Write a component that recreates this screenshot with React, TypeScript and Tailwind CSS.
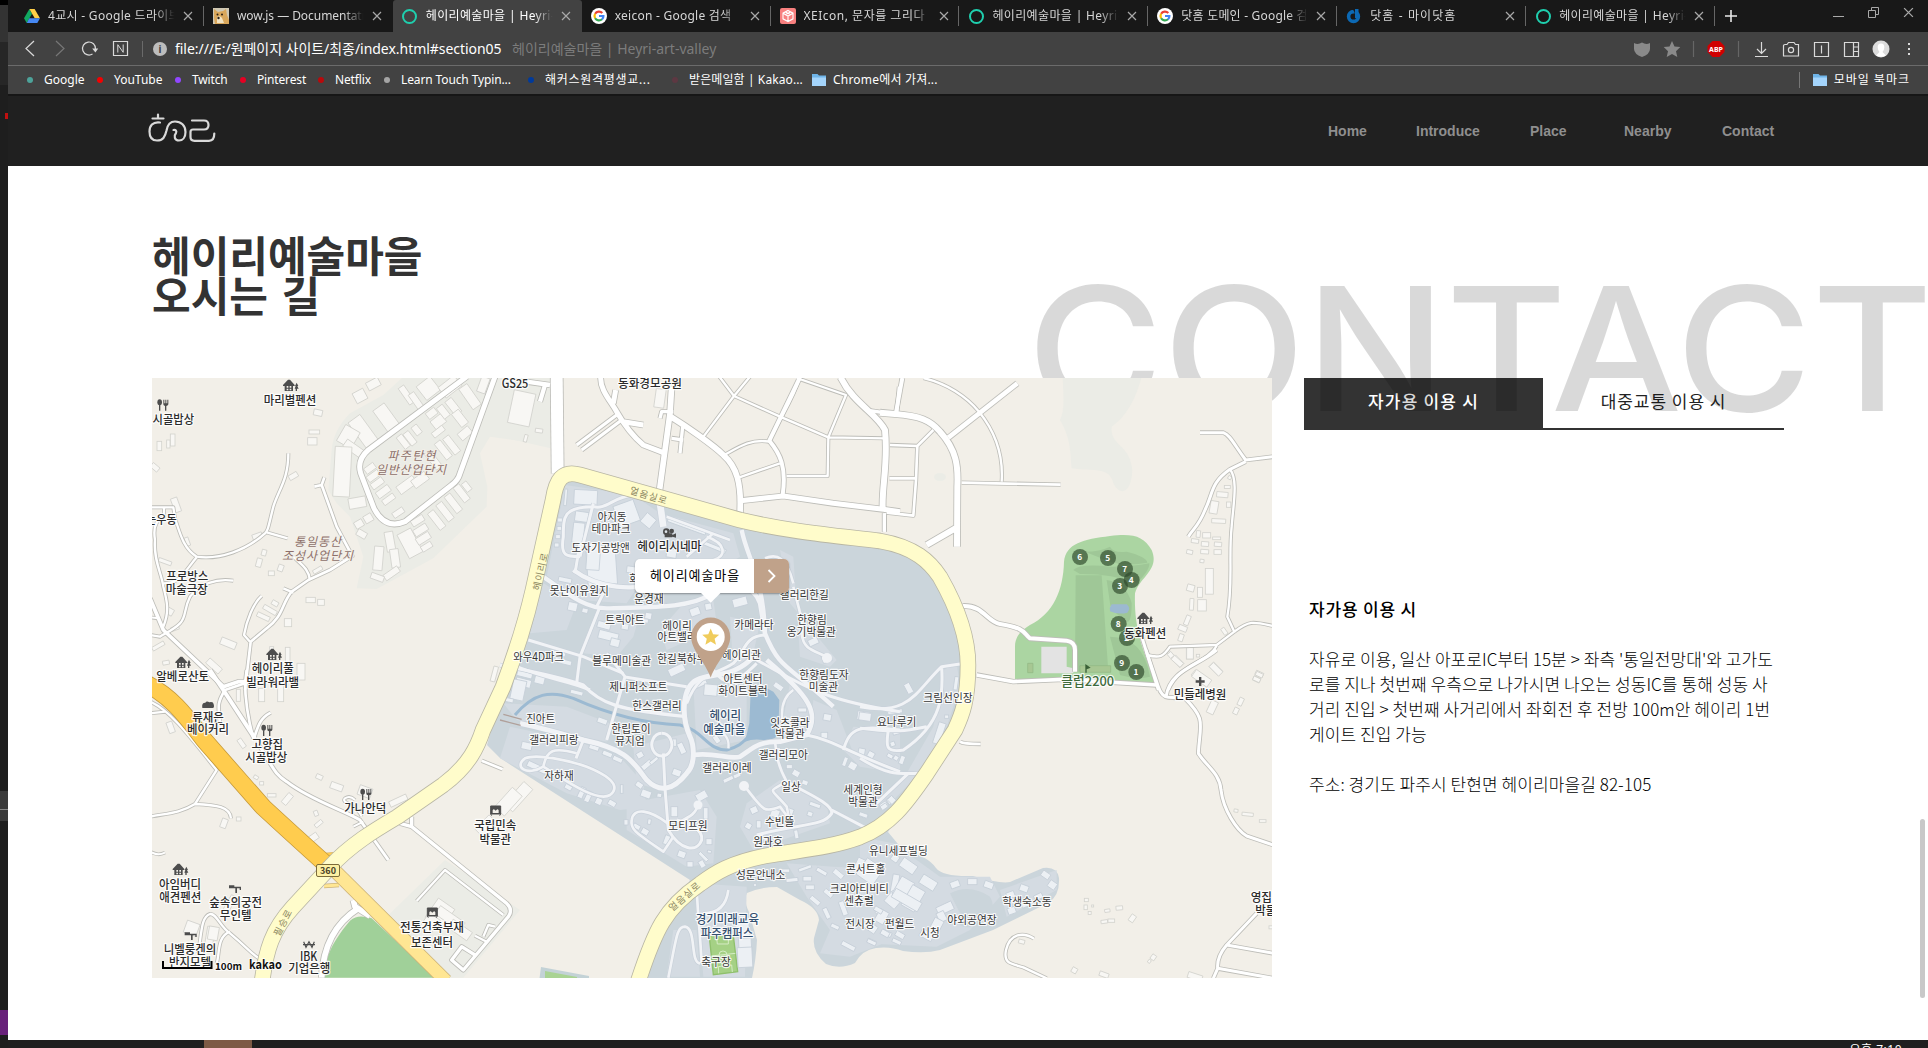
import React from "react";

/* ------------------------------------------------------------------ */
/* Map data. Every entry names the tile it belongs to; tile units are   */
/* a third of a screen pixel.                                          */
/* ------------------------------------------------------------------ */
const TILE: Record<string, [number, number]> = {
  A: [150, 370],
  B: [500, 370],
  C: [880, 370],
  D: [150, 670],
  E: [500, 670],
  F: [860, 650],
};
const tf = (t: string) => `translate(${TILE[t][0]} ${TILE[t][1]}) scale(0.33333)`;

type Road = [string, string, number];

const whiteRoads: Road[] = [
  // north-west
  ["A", "M950 20 L655 240 Q620 270 632 310 L672 415 Q705 480 765 455 L905 345 Q925 330 930 310 L1035 20", 15],
  ["A", "M415 250 C415 330 385 360 370 410 C355 470 355 480 345 490 C290 540 210 570 140 560 C100 535 90 490 75 445 L70 412 L0 412", 7],
  ["A", "M350 487 L413 505", 7],
  ["A", "M42 412 L42 440 C15 450 10 480 15 510 C10 570 35 610 40 650 C50 690 60 720 40 770", 7],
  ["A", "M140 562 C100 610 90 640 40 640", 7],
  ["A", "M250 632 C200 625 150 640 120 680 C100 720 110 740 90 760 C70 780 45 790 30 800 L0 795", 7],
  ["A", "M493 350 L515 345 L523 322 M515 345 L560 470 L607 558 L540 600 L475 630 L425 665 C395 700 400 740 350 775 L302 815 L285 960", 8],
  ["A", "M480 630 C475 595 455 585 430 560 M400 655 L430 668 M335 678 C310 700 290 750 282 795 L300 815", 7],
  ["A", "M0 742 L25 745", 6],
  ["A", "M0 685 L40 780 L220 950 L265 935 L340 935", 11],
  // north
  ["B", "M170 20 L173 310", 36],
  ["B", "M302 20 C300 60 330 90 350 125 C370 160 400 200 430 225 L490 248 M347 60 L340 100 M370 155 L430 165", 15],
  ["B", "M350 135 L230 225 M365 150 L245 240", 10],
  ["B", "M80 35 L150 45 M135 45 L120 95", 13],
  ["B", "M515 50 L510 130 L478 365 M512 140 C560 170 640 225 670 255 C710 290 725 340 720 430", 17],
  ["B", "M520 125 L485 125 L480 145 M515 205 L550 210 M548 170 L540 250", 10],
  ["B", "M658 20 L702 78 L840 140 L985 202 L1155 205 M750 20 L702 78 L608 203 M900 20 C880 90 840 140 808 215 C750 205 710 235 670 257 M890 24 L1038 75 L985 202 L983 318 L860 318 M718 322 L840 280", 7],
  ["B", "M900 22 L808 212 C840 250 860 290 848 375", 12],
  ["B", "M722 392 L850 378 L1000 400 L1150 418 L1200 425", 15],
  ["B", "M1022 22 C1060 100 1130 130 1155 180 C1165 280 1145 350 1148 415", 18],
  ["B", "M1110 122 L1200 135 M1190 130 L1198 50 M1153 430 L1153 485", 10],
  ["C", "M0 128 L45 132 C120 138 150 150 180 185 C230 240 235 290 232 350 L231 530 M235 470 L140 525", 18],
  ["C", "M67 24 L48 128", 12],
  ["C", "M30 225 L112 228 L160 180 M112 228 L108 330 L100 437 L20 428 M108 325 L28 325 M14 430 L14 485", 8],
  ["C", "M130 24 C200 40 260 80 297 125 C350 190 370 260 365 335", 7],
  ["C", "M412 40 L205 203", 14],
  ["C", "M245 338 L542 344", 8],
  ["C", "M960 188 L1030 188 C1050 195 1060 220 1097 270 L1180 260 M1097 275 L1050 298 C990 340 1000 370 975 420 C955 470 940 475 925 500", 9],
  ["C", "M1050 298 C1075 330 1060 400 1055 470 C1045 560 1060 640 1042 740 L1063 785 L1010 825 L870 830 C850 860 840 865 800 855", 7],
  ["C", "M1063 785 C1110 750 1120 755 1180 768 M1010 828 C980 880 900 880 865 960", 7],
  ["C", "M248 708 C310 705 320 755 360 762 C440 775 430 790 450 805 L560 812 Q585 815 585 840 L585 905", 12],
  ["C", "M290 915 L400 935 L550 928 L830 945", 11],
  ["C", "M782 790 L835 960", 9],
  // west
  ["D", "M180 0 L220 60 L315 205", 12],
  ["D", "M290 0 L285 40 L225 60 M225 60 C200 100 205 110 210 160 M285 30 C285 100 295 150 310 205 M362 128 C330 145 325 165 312 205", 8],
  ["D", "M320 215 C370 290 370 310 410 335 C480 390 580 420 630 450 L715 570", 9],
  ["D", "M0 95 C60 120 120 200 200 300 L135 402 C90 430 50 430 0 440 M135 402 C200 405 240 410 243 445 M0 130 L45 125", 7],
  ["D", "M635 440 C620 400 570 400 585 385 C600 375 610 385 615 390 M610 470 L640 455", 6],
  ["D", "M0 545 C20 555 30 555 45 548", 6],
  ["D", "M785 440 L785 470 L1070 700 Q1090 720 1075 740 L940 900 L905 870 L935 830 L975 855 M750 460 L785 470", 10],
  ["D", "M800 693 L885 600 L1060 735 M1035 770 L1015 765 L1000 800 M975 797 L1010 815", 7],
  ["D", "M995 272 L1058 298", 8],
  ["D", "M145 850 C155 780 155 740 180 732 C200 730 210 770 240 790 C300 840 300 850 335 870 M240 785 C200 800 210 850 200 880", 7],
  ["D", "M610 690 L615 710 L660 738 M625 715 C570 750 520 810 515 923", 17],
  // south-east
  ["F", "M300 275 Q310 282 362 282", 8],
  ["F", "M858 0 L895 110 Q905 140 925 142 L975 145 C1040 210 1020 220 1015 310 C1040 350 1080 370 1083 420 C1090 480 1130 540 1160 558 L1240 585", 9],
  ["F", "M918 140 C930 60 1010 50 1070 0", 9],
  ["F", "M1190 790 L1100 885 Q1070 920 1073 955 L1060 985 M1100 885 L1240 910 M1073 955 L1240 985", 9],
  ["F", "M522 866 C490 845 450 850 438 900 C430 940 450 940 490 952 L560 985", 7],
];

const villageRoads: Road[] = [
  ["E", "M60 160 C130 175 200 195 250 210 C390 240 400 280 440 330 C480 370 520 360 560 310 C590 280 580 220 570 200 C540 130 550 50 590 30 C640 5 700 30 770 -50", 15],
  ["E", "M580 255 C640 245 690 270 720 260 C760 235 770 215 840 215 L920 195 C960 130 930 80 800 -30", 14],
  ["E", "M0 -15 C100 5 180 20 250 45 C300 100 350 120 560 140", 10],
  ["E", "M770 -30 C900 40 960 90 1200 125 M920 195 C1000 210 1050 250 1200 305 M1030 240 C1050 170 1080 165 1200 180", 9],
  ["E", "M250 210 L228 265 M320 210 L375 20 L320 -50 M370 20 L560 50", 9],
  ["E", "M130 290 C80 320 40 290 75 265 C110 250 200 270 260 290 C360 330 350 360 330 375 C290 400 180 320 130 290 C140 240 160 230 230 250", 8],
  ["E", "M495 355 L505 480 C540 540 590 550 605 510 C610 480 570 460 530 450", 9],
  ["E", "M503 460 C450 420 400 410 395 450 C390 480 410 490 490 545 L520 500 M540 455 C570 440 590 430 595 400", 8],
  ["E", "M485 190 A30 34 0 1 0 486 190 M490 250 L495 355", 9],
  ["E", "M735 350 C790 420 790 430 840 410 C870 450 870 455 860 410 C810 350 800 370 860 335 C830 280 830 250 825 215", 8],
  ["E", "M870 340 C900 360 1000 400 995 430 C970 470 900 460 770 495 M995 420 L1100 475", 9],
  ["E", "M685 235 C690 190 660 200 665 160 M850 170 C840 120 850 80 880 60", 7],
  ["E", "M505 923 C530 800 530 770 555 770 C590 775 570 880 600 880 M605 880 C600 780 590 700 590 640 M610 730 C660 730 680 700 685 660", 8],
  ["B", "M220 600 C300 660 400 660 480 640 M130 620 C200 670 260 720 330 715 C420 710 560 720 640 670 C700 640 760 640 780 700 L795 790", 13],
  ["B", "M725 480 C740 560 790 620 795 790 C840 900 860 880 1000 1010", 13],
  ["B", "M795 795 C730 800 740 840 700 880 C640 920 600 900 560 1000 M770 880 C700 950 680 950 640 900", 9],
  ["B", "M85 810 L250 860 L370 910 M300 710 L240 860 L230 940 M310 670 L290 710", 9],
  ["B", "M400 375 C340 380 320 420 280 410 C190 410 190 440 190 500 C180 560 200 560 240 560 M240 520 L225 610 M280 400 L240 560", 9],
  ["B", "M500 440 L690 510 M620 500 C680 520 680 560 640 570 M640 490 L560 560", 8],
  ["B", "M880 650 C890 700 910 740 905 790 C910 840 940 840 980 860 M795 565 C830 550 860 560 880 640", 8],
  ["B", "M480 400 L490 470", 20],
  ["B", "M50 890 C150 930 200 930 270 960", 9],
  ["F", "M0 170 C150 200 170 120 245 50 L300 42 M245 50 C250 130 250 220 130 300 C70 310 80 280 85 240 M0 235 C120 250 150 240 200 230 M0 325 C90 380 120 370 185 370 M145 370 L50 460", 9],
];

/* x, y, width, height, rotation */
type Box = [string, number, number, number, number, number];

const landBoxes: Box[] = [
  ["A", 670, 42, 40, 26, -28], ["A", 630, 78, 36, 34, -28], ["A", 770, 75, 20, 60, -35], ["A", 800, 95, 20, 60, -35],
  ["A", 835, 55, 52, 52, -38], ["A", 900, 50, 60, 40, -38], ["A", 960, 80, 30, 75, -35], ["A", 1000, 45, 26, 48, 20],
  ["A", 710, 145, 42, 84, -36], ["A", 640, 185, 44, 96, -36], ["A", 595, 200, 50, 56, 30], ["A", 610, 235, 60, 26, 35],
  ["A", 577, 305, 50, 150, 3], ["A", 622, 398, 52, 32, -10], ["A", 655, 445, 26, 24, -30], ["A", 627, 462, 26, 22, -30],
  ["A", 635, 492, 30, 20, 30], ["A", 685, 565, 28, 72, 5], ["A", 720, 515, 26, 60, -10], ["A", 735, 565, 26, 56, -8],
  ["A", 725, 610, 50, 20, -35], ["A", 682, 622, 40, 18, 20], ["A", 780, 520, 46, 80, -28], ["A", 812, 480, 44, 22, -32],
  ["A", 820, 505, 44, 22, -32], ["A", 830, 530, 34, 18, -32], ["A", 803, 452, 40, 20, -32], ["A", 745, 428, 36, 18, -34],
  ["A", 860, 450, 22, 62, -38], ["A", 885, 425, 22, 62, -38], ["A", 910, 400, 22, 62, -38], ["A", 935, 370, 22, 56, -38],
  ["A", 950, 350, 18, 30, -38], ["A", 845, 130, 32, 22, -38], ["A", 865, 155, 40, 30, -38], ["A", 880, 125, 22, 40, -38],
  ["A", 910, 110, 24, 52, -38], ["A", 930, 145, 26, 50, -38], ["A", 945, 190, 26, 40, 50], ["A", 865, 185, 40, 18, -38],
  ["A", 760, 215, 20, 44, -38], ["A", 780, 205, 20, 44, -38], ["A", 800, 180, 20, 30, -38], ["A", 880, 240, 22, 60, -38],
  ["A", 905, 225, 22, 60, -38], ["A", 850, 270, 22, 60, -38], ["A", 770, 345, 60, 28, -36], ["A", 810, 330, 50, 28, -36],
  ["A", 660, 295, 34, 20, -36], ["A", 670, 318, 40, 20, -36], ["A", 682, 340, 40, 20, -36], ["A", 700, 365, 44, 22, -36], ["A", 716, 388, 40, 18, -36],
  ["A", 504, 128, 26, 18, 12], ["A", 493, 186, 32, 12, 0], ["A", 487, 214, 28, 22, 0], ["A", 430, 318, 28, 16, -30],
  ["A", 28, 228, 14, 28, 0], ["A", 68, 210, 14, 36, 0], ["A", 55, 222, 10, 24, 0], ["A", 15, 292, 26, 16, 40], ["A", 78, 405, 20, 44, -20],
  ["A", 327, 578, 16, 26, 15], ["A", 342, 548, 14, 18, 15], ["A", 364, 610, 18, 14, 0], ["A", 392, 594, 16, 20, 20], ["A", 503, 600, 30, 12, -30],
  ["A", 482, 690, 28, 16, 0], ["A", 513, 697, 20, 18, 0], ["A", 414, 758, 22, 24, 0], ["A", 340, 740, 40, 14, 25], ["A", 360, 720, 44, 14, 30], ["A", 375, 700, 20, 14, 30],
  ["A", 235, 820, 48, 22, 22], ["A", 192, 888, 50, 20, 42], ["A", 413, 855, 14, 46, 0], ["A", 365, 850, 12, 40, 0], ["A", 453, 905, 24, 50, 0],
  ["A", 60, 725, 20, 20, 30], ["A", 75, 775, 24, 12, -20], ["A", 25, 828, 40, 12, -30], ["A", 48, 878, 20, 12, -10], ["A", 45, 575, 40, 12, 20], ["A", 1033, 912, 14, 46, 15],
  ["A", 322, 498, 30, 16, -20], ["A", 112, 515, 12, 26, -20],
  ["B", 65, 115, 66, 100, 12], ["B", 117, 182, 22, 12, 8], ["B", 77, 205, 10, 22, 15], ["B", 480, 85, 30, 56, 8],
  ["C", 1049, 323, 10, 10, 30], ["C", 1042, 351, 18, 9, 0], ["C", 1027, 374, 34, 16, 5], ["C", 1002, 412, 24, 38, 10], ["C", 1046, 404, 13, 16, 0],
  ["C", 1016, 453, 42, 13, 3], ["C", 955, 492, 12, 20, 5], ["C", 980, 496, 24, 16, 0], ["C", 1010, 505, 24, 8, 0], ["C", 945, 513, 22, 12, 8],
  ["C", 975, 522, 22, 14, 4], ["C", 1014, 523, 22, 13, 4], ["C", 974, 545, 24, 13, 4], ["C", 1013, 546, 22, 14, 0], ["C", 929, 546, 18, 12, 12],
  ["C", 966, 573, 12, 10, 8], ["C", 988, 634, 24, 77, 0], ["C", 932, 654, 22, 20, 15], ["C", 960, 667, 15, 30, 0], ["C", 935, 703, 12, 35, 3],
  ["C", 966, 706, 26, 34, 0], ["C", 922, 751, 14, 30, 22], ["C", 908, 775, 26, 16, 22], ["C", 903, 803, 14, 22, 18], ["C", 1033, 784, 12, 22, -35],
  ["C", 929, 850, 20, 34, 0], ["C", 872, 853, 10, 20, -45], ["C", 893, 874, 18, 36, -45], ["C", 954, 857, 10, 8, 0], ["C", 1008, 897, 20, 40, -45],
  ["C", 955, 920, 40, 20, 40], ["C", 1138, 912, 24, 14, 25], ["C", 1130, 928, 22, 14, 25],
  ["D", 62, 172, 18, 34, -20], ["D", 265, 76, 12, 36, 0], ["D", 335, 75, 18, 40, 0], ["D", 392, 70, 18, 50, 0], ["D", 275, 220, 14, 30, -35],
  ["D", 318, 322, 14, 10, 30], ["D", 335, 340, 12, 10, 0], ["D", 508, 321, 20, 14, 25], ["D", 560, 350, 38, 20, 20], ["D", 412, 387, 18, 36, 40],
  ["D", 365, 376, 26, 10, 0], ["D", 498, 430, 12, 16, -20], ["D", 506, 461, 26, 12, -40], ["D", 490, 503, 30, 20, -35], ["D", 745, 392, 56, 18, -25],
  ["D", 266, 447, 14, 12, 0], ["D", 222, 460, 18, 28, 20], ["D", 1105, 380, 90, 36, -48], ["D", 1075, 395, 80, 40, -48], ["D", 1010, 470, 60, 40, -45],
  ["D", 870, 730, 60, 70, 35], ["D", 900, 745, 90, 30, 35], ["D", 840, 760, 40, 50, 35], ["D", 930, 780, 70, 30, 35], ["D", 125, 775, 40, 38, 20], ["D", 180, 800, 24, 60, 10],
  ["D", 190, 790, 30, 40, 10], ["D", 240, 700, 18, 50, 30], ["D", 645, 365, 40, 30, 20],
  ["F", 932, 15, 14, 16, -40], ["F", 990, 10, 20, 34, 0], ["F", 952, 34, 16, 36, -48], ["F", 1068, 58, 18, 40, -45], ["F", 1025, 85, 56, 26, 35],
  ["F", 1057, 172, 22, 40, 25], ["F", 1198, 74, 22, 12, 25], ["F", 1190, 88, 22, 12, 25], ["F", 1142, 155, 14, 24, 25], ["F", 1128, 183, 14, 20, 25],
  ["F", 1128, 482, 12, 9, 10], ["F", 1163, 493, 34, 10, 6], ["F", 1208, 513, 20, 8, 0], ["F", 742, 782, 16, 9, -8], ["F", 778, 774, 20, 12, -5],
  ["F", 733, 815, 20, 10, -8], ["F", 754, 812, 20, 10, 0], ["F", 817, 805, 16, 22, 35], ["F", 679, 750, 12, 10, 0], ["F", 677, 772, 10, 14, 0],
  ["F", 689, 789, 9, 9, 0], ["F", 698, 768, 6, 6, 0], ["F", 880, 922, 14, 16, 35], ["F", 868, 934, 8, 10, 35], ["F", 643, 961, 16, 16, 30],
  ["F", 732, 974, 28, 14, 20], ["F", 1005, 980, 44, 18, 18], ["F", 485, 875, 18, 12, 15], ["F", 1235, 832, 16, 9, 0],
];

const villageBoxes: Box[] = [
  ["B", 257, 382, 70, 44, 3], ["B", 197, 382, 8, 50, 5], ["B", 380, 430, 64, 66, -20], ["B", 445, 452, 36, 34, 40], ["B", 235, 488, 34, 60, 6],
  ["B", 245, 440, 40, 30, 8], ["B", 180, 450, 14, 12, 0], ["B", 178, 475, 14, 12, 0], ["B", 174, 500, 14, 12, 0], ["B", 170, 525, 14, 12, 0],
  ["B", 305, 590, 88, 110, -4], ["B", 280, 560, 40, 80, 4], ["B", 195, 630, 40, 14, 12], ["B", 218, 710, 28, 26, 12], ["B", 255, 722, 18, 14, 12],
  ["B", 312, 766, 40, 20, 15], ["B", 325, 798, 60, 26, 14], ["B", 345, 818, 28, 24, 14], ["B", 445, 738, 20, 20, 10], ["B", 375, 770, 22, 18, 10],
  ["B", 430, 752, 30, 12, 6], ["B", 585, 725, 30, 24, -20], ["B", 625, 710, 20, 20, -10], ["B", 720, 696, 44, 26, -15], ["B", 515, 550, 30, 26, 10],
  ["B", 400, 600, 40, 20, 8], ["B", 940, 815, 30, 20, -25], ["B", 980, 865, 28, 24, -20], ["B", 175, 850, 44, 12, 14], ["B", 190, 875, 50, 14, 14],
  ["B", 75, 910, 46, 24, 14], ["B", 70, 938, 46, 24, 14], ["B", 120, 925, 30, 34, 14], ["B", 300, 870, 28, 16, 14], ["B", 600, 940, 40, 20, -25], ["B", 530, 900, 50, 24, -25],
  ["B", 640, 530, 80, 12, 22], ["B", 560, 470, 120, 10, 20],
  ["E", 55, 60, 40, 60, 12], ["E", 25, 90, 30, 12, 12], ["E", 80, 228, 32, 22, 12], ["E", 230, 68, 38, 12, 14], ["E", 307, 153, 30, 16, 20],
  ["E", 282, 233, 30, 14, 18], ["E", 322, 252, 30, 14, 22], ["E", 353, 268, 30, 14, 24], ["E", 420, 255, 20, 18, -30], ["E", 440, 285, 34, 16, -40],
  ["E", 462, 272, 28, 10, -40], ["E", 545, 235, 18, 34, -25], ["E", 522, 218, 14, 22, 0], ["E", 530, 308, 26, 20, 20], ["E", 418, 345, 22, 16, 35],
  ["E", 438, 372, 30, 22, 20], ["E", 478, 376, 14, 12, 10], ["E", 110, 292, 60, 18, 25], ["E", 205, 352, 22, 14, 30], ["E", 245, 368, 16, 34, 25],
  ["E", 265, 380, 16, 34, 25], ["E", 296, 394, 20, 20, 25], ["E", 336, 400, 24, 16, 30], ["E", 365, 357, 8, 26, 0], ["E", 378, 457, 12, 16, 0],
  ["E", 410, 470, 22, 14, 30], ["E", 435, 485, 22, 18, 30], ["E", 448, 455, 10, 16, 10], ["E", 605, 378, 34, 24, -30], ["E", 617, 430, 14, 34, 0],
  ["E", 523, 425, 20, 30, 0], ["E", 500, 510, 16, 28, 20], ["E", 545, 553, 24, 20, 20], ["E", 570, 583, 18, 16, 0], ["E", 606, 582, 16, 22, -30],
  ["E", 627, 515, 18, 18, 0], ["E", 628, 545, 12, 8, 10], ["E", 610, 560, 34, 10, 45], ["E", 632, 60, 40, 34, 5], ["E", 650, 208, 16, 24, -35],
  ["E", 685, 328, 32, 12, -25], ["E", 711, 317, 22, 12, -25], ["E", 762, 420, 22, 20, -25], ["E", 745, 468, 18, 18, 30], ["E", 776, 463, 14, 22, 0],
  ["E", 825, 430, 26, 24, 20], ["E", 869, 425, 22, 20, 20], ["E", 930, 432, 16, 14, 20], ["E", 889, 493, 12, 26, -10], ["E", 868, 290, 18, 12, 0],
  ["E", 888, 310, 22, 18, 30], ["E", 915, 338, 18, 14, 20], ["E", 832, 245, 18, 24, 0], ["E", 862, 252, 22, 14, -30], ["E", 907, 120, 26, 12, 0],
  ["E", 982, 142, 24, 20, 10], ["E", 973, 196, 20, 18, 0], ["E", 1093, 138, 42, 26, 8], ["E", 1058, 288, 24, 22, 30], ["E", 1035, 275, 12, 28, 20],
  ["E", 1090, 437, 28, 12, 20], ["E", 1152, 406, 22, 18, -35], ["E", 1172, 390, 22, 18, -35], ["E", 945, 405, 34, 12, 20], ["E", 835, 50, 30, 16, 35],
  ["E", 852, 602, 34, 10, 0], ["E", 876, 630, 36, 12, -6], ["E", 915, 595, 40, 10, -20], ["E", 922, 626, 26, 14, 0], ["E", 965, 605, 34, 12, 30],
  ["E", 1015, 612, 34, 16, 40], ["E", 930, 652, 26, 14, 0], ["E", 945, 692, 34, 14, 40], ["E", 980, 730, 14, 34, -25], ["E", 1005, 770, 26, 12, 25],
  ["E", 985, 670, 30, 14, 40], ["E", 1030, 715, 16, 44, -20], ["E", 1045, 828, 44, 14, 28], ["E", 1090, 590, 50, 40, 25], ["E", 1110, 605, 60, 60, 35],
  ["E", 1185, 640, 20, 54, 10], ["E", 1180, 690, 40, 40, 40], ["E", 1145, 735, 40, 14, 40], ["E", 1110, 770, 44, 24, 35], ["E", 1160, 790, 30, 14, 25],
  ["E", 735, 820, 38, 30, -3], ["E", 735, 862, 44, 60, -3], ["E", 728, 780, 40, 40, -3], ["E", 1115, 815, 26, 12, 25], ["E", 765, 645, 8, 8, 0],
  ["F", 146, 115, 18, 32, -28], ["F", 288, 100, 12, 40, 8], ["F", 238, 250, 22, 66, 18], ["F", 260, 200, 12, 10, 0], ["F", 15, 200, 36, 24, 8],
  ["F", 98, 282, 14, 14, -20], ["F", 90, 318, 18, 12, 30], ["F", 108, 324, 14, 14, 30], ["F", 126, 330, 14, 26, 20], ["F", 33, 314, 20, 18, 30],
  ["F", 5, 305, 20, 20, 10], ["F", 95, 450, 20, 18, 45], ["F", 72, 470, 20, 14, -35], ["F", 10, 495, 26, 12, 20], ["F", 105, 185, 44, 12, -8], ["F", 110, 245, 24, 16, -15],
  ["F", 105, 625, 22, 20, 35], ["F", 145, 648, 50, 30, 35], ["F", 205, 698, 50, 30, 32], ["F", 285, 703, 28, 20, -20], ["F", 337, 695, 28, 18, 0],
  ["F", 386, 705, 28, 20, 20], ["F", 492, 715, 26, 20, 20], ["F", 557, 675, 26, 18, 35], ["F", 577, 705, 24, 22, 35], ["F", 452, 735, 24, 20, -20],
  ["F", 455, 782, 24, 20, -20], ["F", 535, 740, 26, 16, -25], ["F", 497, 765, 24, 12, -20], ["F", 130, 715, 44, 60, 30], ["F", 160, 745, 44, 70, 30],
  ["F", 140, 750, 90, 30, 30], ["F", 255, 775, 50, 26, -25], ["F", 245, 800, 24, 30, -25], ["F", 225, 835, 30, 60, 28], ["F", 200, 855, 40, 24, 28],
  ["F", 65, 800, 30, 40, 30], ["F", 55, 780, 26, 14, 30], ["F", 75, 850, 26, 16, 30], ["F", 120, 855, 28, 16, 30], ["F", 110, 875, 28, 12, 25], ["F", 35, 877, 28, 12, 25],
];

/* tile, text, centre x, centre y, width */
type Label = [string, string, number, number, number];

const mainLabels: Label[] = [
  ["A", "마리별펜션", 420, 91, 158], ["A", "시골밥상", 70, 148, 125], ["A", "는우동", 34, 449, 92],
  ["A", "프로방스", 112, 619, 126], ["A", "마술극장", 110, 658, 126], ["A", "알베로산토", 98, 921, 158],
  ["A", "헤이리풀", 368, 897, 126], ["A", "빌라워라밸", 368, 937, 158],
  ["B", "GS25", 45, 42, 80], ["B", "동화경모공원", 450, 41, 192], ["B", "헤이리시네마", 508, 530, 192],
  ["C", "동화펜션", 796, 791, 126],
  ["D", "류재은", 174, 142, 95], ["D", "베이커리", 174, 180, 126], ["D", "고향집", 352, 223, 95], ["D", "시골밥상", 349, 262, 126],
  ["D", "가나안덕", 646, 415, 126], ["D", "국립민속", 1036, 467, 126], ["D", "박물관", 1036, 508, 95],
  ["D", "아임버디", 90, 643, 126], ["D", "애견펜션", 91, 682, 126], ["D", "숲속의궁전", 257, 697, 158], ["D", "무인텔", 257, 737, 95],
  ["D", "니벨룽겐의", 120, 838, 158], ["D", "반지모텔", 120, 877, 126], ["D", "IBK", 476, 859, 52], ["D", "기업은행", 478, 895, 126],
  ["D", "전통건축부재", 846, 773, 192], ["D", "보존센터", 846, 818, 126],
  ["F", "민들레병원", 1020, 133, 158], ["F", "영집사박물관", 1268, 743, 192], ["F", "박물관", 1233, 782, 95],
];

const smallLabels: Label[] = [
  ["B", "아지동", 336, 441, 87], ["B", "테마파크", 333, 476, 117], ["B", "도자기공방앤", 302, 533, 175], ["B", "못난이유원지", 238, 662, 177],
  ["B", "화", 402, 628, 29], ["B", "운경재", 447, 686, 88], ["B", "트릭아트", 375, 750, 118], ["B", "헤이리", 531, 767, 88], ["B", "아트밸리", 531, 802, 118],
  ["B", "카메라타", 762, 765, 118], ["B", "갤러리한길", 913, 675, 147], ["B", "한향림", 936, 749, 88], ["B", "옹기박물관", 934, 786, 148],
  ["B", "와우4D파크", 116, 860, 152], ["B", "블루메미술관", 365, 872, 176], ["B", "한길북하우스", 560, 866, 176], ["B", "헤이리관", 724, 855, 117],
  ["B", "아트센터", 729, 926, 117], ["B", "한향림도자", 972, 914, 148],
  ["E", "제니퍼소프트", 415, 50, 174], ["E", "화이트블럭", 729, 63, 148], ["E", "미술관", 970, 51, 88], ["E", "한스갤러리", 471, 107, 148],
  ["E", "진아트", 122, 146, 87], ["E", "한립토이", 393, 178, 118], ["E", "뮤지엄", 390, 212, 88], ["E", "갤러리피랑", 162, 211, 148],
  ["E", "잇츠콜라", 870, 158, 118], ["E", "박물관", 870, 193, 88], ["E", "갤러리모아", 850, 254, 148], ["E", "갤러리이레", 681, 294, 148],
  ["E", "자하재", 177, 317, 88], ["E", "일상", 873, 351, 58], ["E", "세계인형", 1089, 359, 118], ["E", "박물관", 1089, 395, 88],
  ["E", "수빈뜰", 839, 455, 88], ["E", "모티프원", 564, 467, 118], ["E", "원과호", 804, 515, 88], ["E", "성문안내소", 782, 615, 148],
  ["E", "콘서트홀", 1097, 597, 118], ["E", "크리아티비티", 1078, 657, 177], ["E", "센츄럴", 1077, 692, 88], ["E", "전시장", 1080, 762, 88], ["E", "축구장", 648, 876, 88],
  ["F", "크림선인장", 264, 144, 148], ["F", "요나루키", 110, 216, 118], ["F", "유니세프빌딩", 115, 602, 176], ["F", "펀월드", 119, 823, 88],
  ["F", "야외공연장", 336, 809, 148], ["F", "시청", 210, 849, 58], ["F", "학생숙소동", 501, 755, 148],
];

const navyLabels: Label[] = [
  ["E", "헤이리", 676, 137, 95], ["E", "예술마을", 673, 180, 126], ["E", "경기미래교육", 682, 749, 190], ["E", "파주캠퍼스", 681, 790, 158],
];

const holes: [string, number, number][] = [
  ["6", 600, 561], ["5", 684, 564], ["3", 720, 648], ["7", 735, 597], ["4", 755, 630], ["8", 716, 762], ["2", 741, 804], ["9", 726, 879], ["1", 769, 906],
];

const RING =
  "M262 982 C266 950 272 930 293 907 L330 867 C350 845 375 830 397 817 L443 785 C470 765 478 745 483 730 L503 687 C515 655 525 625 533 590 L553 500 C556 480 562 470 580 475 L740 520 C790 532 840 536 880 541 C915 547 930 562 940 577 C960 612 968 640 968 665 C968 700 962 715 955 730 L927 773 C905 805 890 825 860 837 C830 848 800 850 765 856 C730 863 715 873 700 884 C665 908 655 930 638 982";

function Boxes({ items, fill, stroke }: { items: Box[]; fill: string; stroke: string }) {
  return (
    <g fill={fill} stroke={stroke} strokeWidth={2.5}>
      {items.map(([t, x, y, w, h, r], i) => (
        <g key={i} transform={tf(t)}>
          <rect x={x - w / 2} y={y - h / 2} width={w} height={h} transform={`rotate(${r} ${x} ${y})`} />
        </g>
      ))}
    </g>
  );
}

function Roads({ items, fill, edge, extra }: { items: Road[]; fill: string; edge: string; extra: number }) {
  return (
    <g fill="none" strokeLinejoin="round">
      {items.map(([t, d, w], i) => (
        <path key={"e" + i} transform={tf(t)} d={d} stroke={edge} strokeWidth={w + extra} strokeLinecap="butt" />
      ))}
      {items.map(([t, d, w], i) => (
        <path key={"f" + i} transform={tf(t)} d={d} stroke={fill} strokeWidth={w} strokeLinecap="butt" />
      ))}
    </g>
  );
}

function Labels({ items, size, color, weight }: { items: Label[]; size: number; color: string; weight: number }) {
  return (
    <g fill={color} stroke="#ffffff" strokeOpacity={0.85} strokeWidth={2.4} strokeLinejoin="round" paintOrder="stroke" textAnchor="middle" fontSize={size} fontWeight={weight}>
      {items.map(([t, s, x, y, w], i) => (
        <text key={i} x={TILE[t][0] + x / 3} y={TILE[t][1] + y / 3 + size * 0.34} textLength={w / 3} lengthAdjust="spacingAndGlyphs">
          {s}
        </text>
      ))}
    </g>
  );
}

function House({ t, x, y }: { t: string; x: number; y: number }) {
  return (
    <g transform={tf(t)}>
      <g transform={`translate(${x} ${y})`} fill="#4d4d4d">
        <path d="M-3 -18 H3 L17 -2 V1 H12 V16 H-13 V1 H-18 V-2 Z M23 -9 L28 1 H25 L29 9 H24 V16 H20 V9 L17 9 L20 1 H18 Z" />
        <path d="M-7 1 H-2 V6 H-7 Z M2 1 H7 V6 H2 Z M-7 9 H-2 V14 H-7 Z M2 9 H7 V14 H2 Z" fill="#f2efe9" />
      </g>
    </g>
  );
}

function Food({ t, x, y }: { t: string; x: number; y: number }) {
  return (
    <g transform={tf(t)}>
      <g transform={`translate(${x} ${y})`} fill="#4d4d4d">
        <ellipse cx={-9} cy={-8} rx={7} ry={9} />
        <path d="M-11 0 H-7 V17 H-11 Z M2 -16 H5 V-5 H8 V-16 H11 V-5 H14 V-16 H17 V-2 Q17 2 11 3 V17 H7 V3 Q2 2 2 -2 Z" />
      </g>
    </g>
  );
}

function Museum({ t, x, y }: { t: string; x: number; y: number }) {
  return (
    <g transform={tf(t)}>
      <g transform={`translate(${x} ${y})`}>
        <path d="M-15 -14 H15 V10 H-15 Z M-15 10 L-12 15 M15 10 L12 15" fill="#4d4d4d" stroke="#4d4d4d" strokeWidth={3} />
        <path d="M-9 7 V-1 Q-6 -7 -3 -3 L0 0 L3 -3 Q6 -7 9 -1 V7 Z" fill="#f2efe9" />
      </g>
    </g>
  );
}

function Bed({ x, y }: { x: number; y: number }) {
  return (
    <path transform={`${tf("D")} translate(${x} ${y})`} d="M-18 -10 H-2 V-6 H18 V4 H14 V-1 H6 V13 H1 V-1 H-18 Z" fill="#4d4d4d" />
  );
}

function VillageMap() {
  return (
    <svg className="block h-[600px] w-[1120px]" viewBox="152 378 1120 600" fontFamily='"Noto Sans CJK KR", "Noto Sans", sans-serif'>
      <rect x={152} y={378} width={1120} height={600} fill="#f2efe8" />

      {/* pale industrial and forest patches */}
      <g fill="#ebece6">
        <path transform={tf("A")} d="M760 20 L700 75 L600 130 Q550 180 545 240 L535 360 L560 400 L600 440 L640 560 L620 655 L680 657 L850 565 L1010 410 L1012 350 L990 250 L1020 200 L1200 225 V20 Z" />
        <path transform={tf("B")} d="M0 20 H152 V235 L0 200 Z" />
        <path transform={tf("D")} d="M885 570 L1110 720 L940 923 H880 L690 760 Z" />
      </g>
      <path transform={tf("C")} d="M548 20 H785 C770 80 740 140 695 170 C690 230 750 220 757 300 C755 370 720 380 700 340 C690 290 640 305 575 295 C570 250 575 210 540 150 C555 120 550 80 548 20 Z" fill="#ebece6" />
      <ellipse cx={940} cy={477} rx={6} ry={4} fill="#ebece6" />

      {/* village ground */}
      <path
        d="M487 745 L503 687 L555 480 L580 475 L740 520 L880 541 L940 577 L968 660 L957 727 L903 807 L888 832 L903 850 Q928 856 936 868 Q943 877 973 876 Q1000 884 1010 882 L1043 868 Q1057 866 1059 878 Q1060 896 1048 903 L993 930 L940 950 Q925 954 903 951 Q890 946 876 948 Q862 950 855 963 Q840 970 826 964 Q812 952 814 938 L819 920 Q818 908 800 900 L777 887 Q760 887 747 893 Q743 900 749 912 L757 940 Q756 960 752 978 H640 L690 880 L500 758 Z"
        fill="#cbd5db"
      />
      <g fill="#d4dbe2">
        <path transform={tf("B")} d="M195 345 L400 375 L480 430 L700 490 L720 560 L640 610 L540 600 L420 640 L380 700 L230 690 L140 620 Z M300 715 L420 730 L400 800 L350 860 L250 850 Z M560 690 L640 690 L650 760 L590 800 L500 840 L480 780 Z M690 740 L780 760 L760 850 L700 900 Z M880 560 L840 540 L870 700 L1010 870 L990 890 L900 860 Z M130 640 L230 700 L200 780 L90 790 Z" />
        <path transform={tf("E")} d="M10 100 L200 110 L330 160 L320 215 L250 200 L50 150 Z M30 170 L220 210 L360 260 L430 340 L440 410 L360 420 L200 370 L0 265 Z M580 40 L740 60 L740 210 L590 240 Z M400 230 L560 190 L580 300 L480 360 L410 340 Z M380 400 L600 360 L650 440 L640 580 L560 590 L380 480 Z M740 400 L840 330 L980 400 L990 460 L760 540 L720 470 Z M870 40 L930 120 L900 200 L840 200 Z M940 90 L1010 120 L1060 250 L930 190 Z M1030 240 L1080 290 L1200 310 V180 L1060 170 Z M590 640 L740 650 L735 920 L610 920 Z M520 780 L590 780 L600 920 H500 Z M860 580 L1000 590 L1200 600 V800 L1050 860 L960 850 L990 780 L920 680 Z" />
        <path transform={tf("F")} d="M290 40 L300 110 L260 230 L180 370 L100 450 L30 480 L140 370 L220 230 L250 60 Z M0 560 L100 580 L240 680 L390 680 L420 740 L330 840 L230 890 L0 880 Z M420 720 L590 660 L590 720 L440 800 Z" />
      </g>
      <g fill="#cbd5db">
        <path transform={tf("F")} d="M270 730 Q330 700 390 740 Q420 790 340 830 Q280 840 300 790 Z" />
      </g>

      {/* ponds and stream */}
      <path transform={tf("E")} d="M752 65 Q790 45 820 65 L838 90 L835 190 Q830 212 790 210 Q760 205 735 215 L748 160 Z" fill="#9cbad2" />
      <path transform={tf("E")} d="M45 135 C100 70 150 60 220 85 C320 130 430 160 540 165 C610 180 620 240 680 240 C720 230 730 215 745 200" fill="none" stroke="#9cbad2" strokeWidth={9} />

      {/* golf course */}
      <path transform={tf("C")} d="M405 930 V830 C405 800 420 785 450 765 C520 730 550 660 552 575 C558 520 610 508 690 498 C760 490 790 498 815 540 C840 600 780 620 765 670 C762 760 780 830 832 942 L550 925 Z" fill="#abd5a2" />
      <g transform={tf("C")} fill="#9fc797">
        <path d="M587 616 H665 L685 905 H585 Z M615 545 Q660 545 690 530 Q700 550 740 545 Q800 560 802 578 Q740 590 690 575 Z M580 600 Q600 580 690 590 Q760 590 808 580 Q810 600 770 640 Q690 610 600 612 Z M680 630 Q740 640 755 700 Q755 760 740 755 Q690 720 690 700 Z M690 800 Q790 800 810 920 Q770 930 720 915 Z" />
        <path d="M443 880 h16 v28 h-16 Z M600 887 h92 v20 h-92 Z" fill="#a7c793" stroke="#8fb683" strokeWidth={2} />
      </g>
      <path transform={tf("C")} d="M484 830 H560 V890 L580 895 V910 H484 Z" fill="#e3e3e3" />
      <path transform={tf("C")} d="M695 703 H740 Q755 715 742 728 Q715 735 690 724 Q688 712 695 703 Z" fill="#9cb9d1" />

      {/* park south of the crossing */}
      <path transform={tf("D")} d="M520 923 C525 850 560 800 600 752 C620 735 640 738 665 745 L855 923 Z" fill="#a0d099" />
      <path d="M541 967 l48 9 v6 h-50 Z" fill="#c3d2d6" />
      <path d="M545 971 l32 6 v4 h-32 Z" fill="#a9d393" />
      <g transform={tf("E")}>
        <path d="M628 800 L700 797 L713 905 L640 914 Z" fill="#a5d185" stroke="#8fc06c" strokeWidth={4} />
        <path d="M634 858 L706 850 M650 802 L652 822 H685 V799 M656 910 L655 890 L695 885 L697 906" stroke="#d5ecc5" strokeWidth={3} fill="none" />
        <circle cx={669} cy={855} r={12} stroke="#d5ecc5" strokeWidth={3} fill="none" />
      </g>

      <Boxes items={landBoxes} fill="#f8f7f4" stroke="#d3d3ce" />
      <Boxes items={villageBoxes} fill="#ecf0f4" stroke="#c6cfd8" />
      <Roads items={villageRoads} fill="#f1f3f6" edge="#c9d1da" extra={4} />
      <circle cx={744} cy={786} r={5} fill="#f1f3f6" />
      <circle cx={698} cy={805} r={4.5} fill="#f1f3f6" />
      <circle cx={827} cy={658} r={5} fill="#f1f3f6" />
      <Roads items={whiteRoads} fill="#ffffff" edge="#bdbdb8" extra={5} />
      <path transform={tf("E")} d="M10 133 L65 148 M0 150 L62 166" stroke="#b0a09a" strokeWidth={4} />

      {/* trunk roads */}
      <g fill="none">
        <path d="M322 855 L337 854" stroke="#d9a940" strokeWidth={4} />
        <path d="M323 854.5 L336 854" stroke="#ffcc4e" strokeWidth={2.4} />
        <path d="M324 886 L339 885" stroke="#cdb377" strokeWidth={4.5} />
        <path d="M324 886 L339 885" stroke="#ffe693" strokeWidth={3} />
        <path d="M330 866 L446 981" stroke="#cdb377" strokeWidth={14} />
        <path d="M330 866 L446 981" stroke="#ffe693" strokeWidth={12.4} />
        <path d="M145 683 C175 698 190 722 205 741 L263 807 Q290 832 330 868" stroke="#c69a3b" strokeWidth={18} />
        <path d="M145 683 C175 698 190 722 205 741 L263 807 Q290 832 330 868" stroke="#ffcc4e" strokeWidth={16.4} />
        <path d={RING} stroke="#b8b6a4" strokeWidth={16.4} />
        <path d={RING} stroke="#fffccb" strokeWidth={14.8} />
      </g>

      {/* road names */}
      <g fill="#8b8560" fontSize={9.5} textAnchor="middle" letterSpacing={1}>
        <text transform="translate(648 499) rotate(17)">얼음실로</text>
        <text transform="translate(544 572) rotate(-77)">헤이리로</text>
        <text transform="translate(687 899) rotate(-41)">얼음실로</text>
        <text transform="translate(286 924) rotate(-62)">필승로</text>
      </g>

      {/* district names */}
      <g fill="#8d6f6a" fontSize={12} fontStyle="italic" textAnchor="middle" stroke="#f2efe8" strokeWidth={2} paintOrder="stroke">
        <text x={411.5} y={459.5} textLength={48}>파주탄현</text>
        <text x={411} y={474} textLength={70}>일반산업단지</text>
        <text x={317.5} y={545.5} textLength={47}>통일동산</text>
        <text x={317.5} y={560} textLength={71}>조성사업단지</text>
      </g>

      <g transform={tf("C")}>
        {holes.map(([n, x, y]) => (
          <g key={n}>
            <circle cx={x} cy={y} r={24} fill="#2f4a2c" fillOpacity={0.68} />
            <text x={x - 1} y={y + 9} fill="#ffffff" fontSize={25} fontWeight={700} textAnchor="middle">{n}</text>
          </g>
        ))}
        <path d="M616 882 L632 893 L620 898 V908 H616 Z" fill="#3a6138" />
      </g>

      <Labels items={smallLabels} size={11.8} color="#363636" weight={400} />
      <Labels items={mainLabels} size={12.4} color="#2b2b2b" weight={500} />
      <Labels items={navyLabels} size={12.4} color="#35506f" weight={500} />
      <Labels items={[["C", "클럽2200", 623, 934, 158]]} size={13.5} color="#3f6b3c" weight={500} />

      <House t="A" x={417} y={47} />
      <House t="A" x={94} y={878} />
      <House t="A" x={367} y={854} />
      <House t="C" x={790} y={746} />
      <House t="D" x={86} y={599} />
      <Food t="A" x={38} y={105} />
      <Food t="D" x={350} y={181} />
      <Food t="D" x={647} y={373} />
      <Museum t="D" x={1037} y={422} />
      <Museum t="D" x={847} y={728} />
      <Bed x={255} y={656} />
      <Bed x={122} y={797} />
      <path transform={tf("D")} d="M157 114 Q154 98 166 98 Q170 92 178 97 Q190 94 191 103 Q194 114 188 114 Z" fill="#4d4d4d" />
      <path transform={tf("D")} d="M461 815 L468 832 L477 815 L486 832 L493 815 M459 824 H495" fill="none" stroke="#4d4d4d" strokeWidth={3.5} />
      <path transform={tf("F")} d="M1017 81 h7 v10 h10 v7 h-10 v10 h-7 v-10 h-10 v-7 h10 Z" fill="#4d4d4d" />
      <g transform={tf("B")} fill="#4d4d4d">
        <circle cx={499} cy={485} r={10} /><circle cx={515} cy={483} r={7} /><path d="M494 490 H517 V502 H494 Z M517 495 L528 490 V503 L517 500 Z" />
        <circle cx={498} cy={485} r={4} fill="#dfe4ea" />
      </g>

      {/* route badge */}
      <rect x={316.5} y={864.5} width={23} height={12} rx={1.5} fill="#fdf0a4" stroke="#7c6b3a" />
      <text x={328} y={874} fill="#4a4228" fontSize={9} fontWeight={700} textAnchor="middle">360</text>

      {/* scale and brand */}
      <path d="M163 961 V968 H211.5 V961" fill="none" stroke="#000000" strokeWidth={2} />
      <g fill="#111111" stroke="#ffffff" strokeWidth={2} strokeOpacity={0.8} paintOrder="stroke">
        <text x={215} y={969.5} fontSize={9.5} fontWeight={700} textLength={27} lengthAdjust="spacingAndGlyphs">100m</text>
        <text x={249} y={968.5} fontSize={12.5} fontWeight={700} textLength={33} lengthAdjust="spacingAndGlyphs">kakao</text>
      </g>
    </svg>
  );
}

/* ------------------------------------------------------------------ */
/* Browser chrome                                                      */
/* ------------------------------------------------------------------ */
function DriveIcon() {
  return (
    <svg className="h-3.5 w-4" viewBox="0 0 16 14">
      <path d="M5.4 0 L0 9.3 L2.7 14 L8 4.7 Z" fill="#11a861" />
      <path d="M5.4 0 H10.6 L16 9.3 H10.7 Z" fill="#ffcf48" />
      <path d="M5.3 9.3 H16 L13.3 14 H2.7 Z" fill="#4688f4" />
    </svg>
  );
}
function DogeIcon() {
  return (
    <svg className="h-4 w-4" viewBox="0 0 16 16">
      <rect width="16" height="16" fill="#cfc8b4" />
      <path d="M1 1 L5 4 L10 3 L13 1 L14 7 L16 12 V16 H2 L1 10 Z" fill="#d9a75b" />
      <path d="M4 9 Q7 7 9 10 L11 15 H4 Z" fill="#f1e3c4" />
      <circle cx="4.5" cy="6.5" r="1" fill="#2d2115" /><circle cx="9" cy="6.5" r="1" fill="#2d2115" /><circle cx="5.5" cy="10" r="1.2" fill="#2d2115" />
    </svg>
  );
}
function RingIcon() {
  return <span className="block h-[15px] w-[15px] rounded-full border-2 border-[#1fcfae]" />;
}
function GoogleIcon() {
  return (
    <svg className="h-4 w-4" viewBox="0 0 16 16">
      <circle cx="8" cy="8" r="8" fill="#fff" />
      <g fill="none" strokeWidth="2.2">
        <path d="M11.3 5 A4.5 4.5 0 0 0 4.1 5.8" stroke="#ea4335" />
        <path d="M4.1 5.8 A4.5 4.5 0 0 0 4.1 10.2" stroke="#fbbc05" />
        <path d="M4.1 10.2 A4.5 4.5 0 0 0 11 11.3" stroke="#34a853" />
        <path d="M11 11.3 Q12.5 10 12.4 8 H8" stroke="#4285f4" />
      </g>
    </svg>
  );
}
function XeIcon() {
  return (
    <svg className="h-4 w-4" viewBox="0 0 16 16">
      <rect width="16" height="16" rx="2" fill="#f8807f" />
      <path d="M8 2.5 L13 5.2 V10.8 L8 13.5 L3 10.8 V5.2 Z M3 5.2 L8 8 L13 5.2 M8 8 V13.5 M5.5 4 L10.8 6.8 M10.5 4 L5.2 6.8" fill="none" stroke="#fff" strokeWidth="1.1" />
    </svg>
  );
}
function DotIcon() {
  return (
    <svg className="h-4 w-4" viewBox="0 0 16 16">
      <circle cx="7.5" cy="8.500" r="4.900" fill="none" stroke="#0c69b4" strokeWidth="3.600" />
      <path d="M6.500 1 H10.500 V9 H8.500 V4 Z" fill="#181818" />
      <path d="M9 1 H12.500 V9 Q11 11 9 10 Z" fill="#0c69b4" />
    </svg>
  );
}
function X({ className }: { className: string }) {
  return (
    <svg className={className} viewBox="0 0 10 10">
      <path d="M1 1 L9 9 M9 1 L1 9" stroke="currentColor" strokeWidth="1.2" fill="none" />
    </svg>
  );
}

const tabs = [
  { icon: <DriveIcon />, title: "4교시 - Google 드라이브", track: "tracking-[0.3px]" },
  { icon: <DogeIcon />, title: "wow.js — Documentation", track: "tracking-[-0.05px]" },
  { icon: <RingIcon />, title: "헤이리예술마을 | Heyri-art", track: "tracking-[0.35px]", active: true },
  { icon: <GoogleIcon />, title: "xeicon - Google 검색", track: "tracking-[0.25px]" },
  { icon: <XeIcon />, title: "XEIcon, 문자를 그리다", track: "tracking-[0.5px]" },
  { icon: <RingIcon />, title: "헤이리예술마을 | Heyri-art", track: "tracking-[0.35px]" },
  { icon: <GoogleIcon />, title: "닷홈 도메인 - Google 검색", track: "tracking-[0.2px]" },
  { icon: <DotIcon />, title: "닷홈 - 마이닷홈", track: "tracking-[1.1px]" },
  { icon: <RingIcon />, title: "헤이리예술마을 | Heyri-art", track: "tracking-[0.35px]" },
];

function TabBar() {
  return (
    <div className="flex h-8 bg-[#181818] pl-[7px]">
      {tabs.map((t, i) => (
        <div
          key={i}
          className={
            "relative flex h-8 w-[188.9px] shrink-0 items-center pl-[9px] " +
            (t.active ? "rounded-t-[3px] bg-[#424242] text-white" : "text-[#d6d6d6]")
          }
        >
          <span className="flex w-4 shrink-0 justify-center">{t.icon}</span>
          <span
            className={
              "ml-2 w-[128px] overflow-hidden whitespace-nowrap text-[12px] leading-4 [mask-image:linear-gradient(to_right,black_84%,transparent_99%)] " +
              t.track
            }
          >
            {t.title}
          </span>
          <X className="ml-[7px] h-2.5 w-2.5 text-[#a8a8a8]" />
          {i !== 1 && i !== 2 && <span className="absolute right-0 top-1.5 h-5 w-px bg-[#666]" />}
        </div>
      ))}
      <svg className="ml-[10px] mt-2.5 h-3 w-3" viewBox="0 0 12 12">
        <path d="M6 0 V12 M0 6 H12" stroke="#e8e8e8" strokeWidth="1.6" />
      </svg>
      <div className="ml-auto flex gap-[24px] pr-[14px] pt-[7px] text-[#a9a9a9]">
        <svg className="h-2.5 w-[11px]" viewBox="0 0 11 10"><path d="M0 9.5 H11" stroke="currentColor" /></svg>
        <svg className="h-[11px] w-[11px]" viewBox="0 0 11 11"><path d="M.5 3.5 H7.5 V10.5 H.5 Z M3.5 3.5 V.5 H10.5 V7.5 H7.5" stroke="currentColor" fill="none" /></svg>
        <X className="h-[11px] w-[11px]" />
      </div>
    </div>
  );
}

function AddressBar() {
  return (
    <div className="flex h-[34px] items-center border-b border-[#6b6b6b] bg-[#424242] pl-4 text-[#dadada]">
      <svg className="h-[17px] w-[112px]" viewBox="24 40 112 17" fill="none" stroke="currentColor" strokeWidth="1.2">
        <path d="M34 41 L26 48.5 L34 56" />
        <path d="M56 41 L64 48.5 L56 56" stroke="#777" />
        <path d="M92.5 54 A6.5 6.5 0 1 1 95.5 49" /><path d="M92.2 48.5 H98.2 L95.4 52.5 Z" fill="currentColor" stroke="none" />
        <path d="M113.5 41.5 H127.5 V55.5 H113.5 Z" /><path d="M117.8 52.5 V44.7 L123.2 52.3 V44.5" strokeWidth="1" />
      </svg>
      <span className="ml-[6px] h-4 w-px bg-[#6a6a6a]" />
      <span className="ml-[10px] flex h-3.5 w-3.5 items-center justify-center rounded-full bg-[#bdbdbd] font-bold text-[10px] leading-none text-[#424242]">i</span>
      <span className="ml-2 w-[337px] whitespace-nowrap text-[14px] tracking-[-0.04px] text-white">file:///E:/원페이지 사이트/최종/index.html#section05</span>
      <span className="whitespace-nowrap text-[14px] text-[#7c7c7c]">헤이리예술마을 | Heyri-art-valley</span>
      <svg className="ml-auto h-6 w-[298px]" viewBox="1630 37 298 24" fill="none" stroke="#dadada" strokeWidth="1.2">
        <path d="M1634 43 Q1638 45 1642 42.5 Q1646 45 1650 43 V49 Q1650 54 1642 57 Q1634 54 1634 49 Z" fill="#8a8a8a" stroke="none" />
        <path d="M1672 41 L1674.5 46.5 L1680.3 47 L1676 51.2 L1677.3 57 L1672 54 L1666.7 57 L1668 51.2 L1663.7 47 L1669.5 46.5 Z" fill="#8a8a8a" stroke="none" />
        <path d="M1693.5 41 V57 M1738.5 41 V57" stroke="#666" />
        <path d="M1712.5 41 H1719.5 L1724.5 46 V52 L1719.5 57 H1712.5 L1707.5 52 V46 Z" fill="#d00000" stroke="none" />
        <text x="1716" y="52" fill="#fff" stroke="none" fontSize="7" fontWeight="700" textAnchor="middle">ABP</text>
        <path d="M1761.5 42 V53 M1757 49 L1761.5 53.5 L1766 49 M1755 56.5 H1768" />
        <path d="M1783.5 45.5 Q1783.5 44.5 1785 44.5 H1787 L1788.5 42.5 H1794 L1795.5 44.5 H1798.5 V56 H1783.5 Z" /><circle cx="1791" cy="50" r="2.6" />
        <path d="M1814.5 42.5 H1828.5 V56.5 H1814.5 Z M1821.5 45.5 V53.5" />
        <path d="M1844.5 42.5 H1858.5 V56.5 H1844.5 Z M1853.5 42.5 V56.5 M1853.5 47 H1858.5 M1853.5 51.5 H1858.5" />
        <circle cx="1881" cy="49" r="8.5" fill="#dcdcdc" stroke="none" />
        <path d="M1881 43.5 Q1884.5 43.5 1884.3 47.5 Q1884 51 1882.5 52 L1886 55.5 Q1881 58 1876 55.5 L1879.5 52 Q1878 51 1877.7 47.5 Q1877.5 43.5 1881 43.5 Z" fill="#fff" stroke="none" />
        <path d="M1908 43 h2 v2 h-2 Z M1908 48 h2 v2 h-2 Z M1908 53 h2 v2 h-2 Z" fill="#dadada" stroke="none" />
      </svg>
    </div>
  );
}

function Folder() {
  return (
    <svg className="h-3 w-3.5" viewBox="0 0 14 12">
      <path d="M0 0 H5.5 L7 1.5 H14 V12 H0 Z" fill="#6fb4e8" />
      <path d="M0 3.5 H14 V12 H0 Z" fill="#a4d4fb" />
    </svg>
  );
}

const bookmarks = [
  { label: "Google", dot: "bg-[#4da39a]", w: "w-[70px]" },
  { label: "YouTube", dot: "bg-[#f40000]", w: "w-[78px]" },
  { label: "Twitch", dot: "bg-[#9147ff]", w: "w-[65px] tracking-[-0.15px]" },
  { label: "Pinterest", dot: "bg-[#e60023]", w: "w-[78px] tracking-[-0.15px]" },
  { label: "Netflix", dot: "bg-[#b9090b]", w: "w-[66px] tracking-[-0.15px]" },
  { label: "Learn Touch Typin...", dot: "bg-[#a5a5a5]", w: "w-[144px] tracking-[-0.12px]" },
  { label: "해커스원격평생교...", dot: "bg-[#003a9b]", w: "w-[144px] tracking-[0.7px]" },
  { label: "받은메일함 | Kakao...", dot: "bg-[#5d3842]", w: "w-[140px] tracking-[0.1px]" },
];

function BookmarkBar() {
  return (
    <div className="flex h-[30px] items-center border-b-2 border-[#161616] bg-[#424242] pl-[19px] pr-[18px] text-[12px] text-white">
      {bookmarks.map((b) => (
        <div key={b.label} className={"flex shrink-0 items-center whitespace-nowrap " + b.w}>
          <span className={"mr-[11px] h-1.5 w-1.5 rounded-full " + b.dot} />
          <span>{b.label}</span>
        </div>
      ))}
      <Folder />
      <span className="ml-[7px] whitespace-nowrap tracking-[0.2px]">Chrome에서 가져...</span>
      <span className="ml-auto mr-[13px] h-4 w-px bg-[#777]" />
      <Folder />
      <span className="ml-[7px] whitespace-nowrap tracking-[1px]">모바일 북마크</span>
    </div>
  );
}

/* ------------------------------------------------------------------ */
/* Page                                                                */
/* ------------------------------------------------------------------ */
function SiteHeader() {
  return (
    <header className="flex h-[70px] items-center bg-[#202020]">
      <svg className="-mt-1.5 ml-[139px] h-[30px] w-[70px]" viewBox="147 113 70 30" fill="none" stroke="#d9d9d9" strokeWidth="2.2" strokeLinecap="round">
        <path d="M158 114.5 V118 M152.5 118.5 H163.5" />
        <path d="M160 122.5 C152.500 121.500 149.500 126 149.500 131.500 C149.500 137.500 152.500 140.500 157 140.500 C163 140.500 165 137 166.500 130.500 C167.500 124.500 170.500 121.500 175 121.500 C181 121.500 185.500 125.500 185.500 132 C185.500 137.500 182.500 140.500 179 140.500 C174.500 140.500 173.500 136 176 133 C177 131 175.500 129.500 173.500 130" />
        <path d="M192 120.500 H204 Q208.500 120.500 208.500 125 Q208.500 129.500 204 129.500 H193 Q190.500 129.500 190.500 132 V137 Q190.500 140.800 194.500 140.800 H209 Q214.300 140.800 214.300 133.500" />
      </svg>
      <nav className="ml-[1111px] flex font-['Liberation_Sans',Arial,sans-serif] text-[14px] font-bold text-[#8f8f8f]">
        <a className="w-[88px]">Home</a>
        <a className="w-[114px]">Introduce</a>
        <a className="w-[94px]">Place</a>
        <a className="w-[98px]">Nearby</a>
        <a>Contact</a>
      </nav>
    </header>
  );
}

function Callout() {
  return (
    <div className="absolute left-[483px] top-[181px] flex w-[154px] flex-col">
      <div className="flex h-[34px] overflow-hidden rounded-[5px] bg-white shadow-[0_1px_2px_rgba(0,0,0,0.35)]">
        <span className="w-[119px] pl-[15px] text-[13px] leading-[32px] tracking-[0.9px] whitespace-nowrap text-black">헤이리예술마을</span>
        <span className="flex w-[35px] items-center justify-center bg-[#c0a28a]">
          <svg className="h-3.5 w-2.5" viewBox="0 0 10 14"><path d="M1.500 1 L7.500 7 L1.500 13" fill="none" stroke="#fff" strokeWidth="1.8" /></svg>
        </span>
      </div>
      <svg className="ml-[55px] -mt-px h-[86px] w-[42px]" viewBox="690 592 42 86">
        <path d="M700 592 H721.500 L710.700 602.700 Z" fill="#fff" />
        <path d="M710.700 617.500 A19.500 19.500 0 0 0 691.200 637 C691.200 650 704 660 710.700 677.500 C717.400 660 730.200 650 730.200 637 A19.500 19.500 0 0 0 710.700 617.500 Z" fill="#c0a28a" />
        <circle cx="710.700" cy="637" r="14" fill="#fff" />
        <path d="M710.700 628.500 L713.100 634.200 L719.200 634.700 L714.600 638.700 L716 644.700 L710.700 641.500 L705.400 644.700 L706.800 638.700 L702.200 634.700 L708.300 634.200 Z" fill="#f0cc5c" />
      </svg>
    </div>
  );
}

export default function App() {
  return (
    <div className="relative flex h-[1048px] w-[1928px] overflow-hidden bg-[#1e1e1e] font-['Noto_Sans','Noto_Sans_CJK_KR',sans-serif]">
      {/* sliver of the window behind */}
      <div className="flex w-2 shrink-0 flex-col">
        <div className="h-[5px] bg-black" />
        <div className="h-[37px] bg-[#333]" />
        <div className="h-[43px] bg-[#262626]" />
        <div className="h-[28px]" />
        <div className="ml-[5px] h-[6px] bg-[#c01010]" />
        <div className="h-[672px]" />
        <div className="h-[30px] bg-[#3a3a3a] pt-[18px]">
          <div className="h-px bg-[#888]" />
        </div>
        <div className="h-[189px]" />
        <div className="h-[25px] bg-[#68217a]" />
      </div>

      <div className="flex w-[1920px] flex-col">
        <TabBar />
        <AddressBar />
        <BookmarkBar />
        <SiteHeader />

        <main className="relative h-[874px] overflow-hidden bg-white pl-36 pt-[68px]">
          <h2 className="h-[144px] font-['Noto_Sans_CJK_KR',sans-serif] text-[42px] font-bold leading-10 text-[#333] [word-spacing:4px]">
            헤이리예술마을
            <br />
            오시는 길
          </h2>
          <div className="flex">
            <div className="relative z-20 h-[600px] w-[1120px] overflow-hidden font-['Noto_Sans_CJK_KR',sans-serif]">
              <VillageMap />
              <Callout />
            </div>
            <section className="ml-8 w-[480px] font-['Noto_Sans_CJK_KR',sans-serif]">
              <div className="flex h-[52px] border-b-2 border-[#333] text-[17px] leading-[45px]">
                <div className="h-[52px] w-[239px] bg-[#333] text-center font-medium tracking-[1.2px] text-white">자가용 이용 시</div>
                <div className="grow text-center tracking-[0.95px] text-[#222]">대중교통 이용 시</div>
              </div>
              <div className="pl-[5px] pt-[166px] text-[17px] font-light leading-[25px] tracking-[0.08px] whitespace-nowrap text-black">
                <p className="font-medium tracking-[0.8px]">자가용 이용 시</p>
                <p className="mt-[25px]">
                  자유로 이용, 일산 아포로IC부터 15분 &gt; 좌측 '통일전망대'와 고가도
                  <br />
                  로를 지나 첫번째 우측으로 나가시면 나오는 성동IC를 통해 성동 사
                  <br />
                  거리 진입 &gt; 첫번째 사거리에서 좌회전 후 전방 100m안 헤이리 1번
                  <br />
                  게이트 진입 가능
                </p>
                <p className="mt-[25px]">주소: 경기도 파주시 탄현면 헤이리마을길 82-105</p>
              </div>
            </section>
          </div>
          <div className="pointer-events-none absolute left-[1019px] top-[95px] z-10 origin-left scale-x-[1.079] font-['Inter',sans-serif] text-[172px] font-medium leading-[174px] text-black/15">
            CONTACT
          </div>
          <div className="absolute right-[3px] top-[653px] h-[179px] w-[5px] rounded-full bg-[#c8c8c8]" />
        </main>

        <footer className="flex h-2 items-start overflow-hidden bg-[#1f1f1f]">
          <div className="ml-[196px] h-2 w-12 bg-[#7d5a45]" />
          <div className="ml-auto mr-[26px] mt-[3px] text-[12px] leading-[14px] tracking-[0.5px] text-white">오후 7:10</div>
        </footer>
      </div>
    </div>
  );
}
